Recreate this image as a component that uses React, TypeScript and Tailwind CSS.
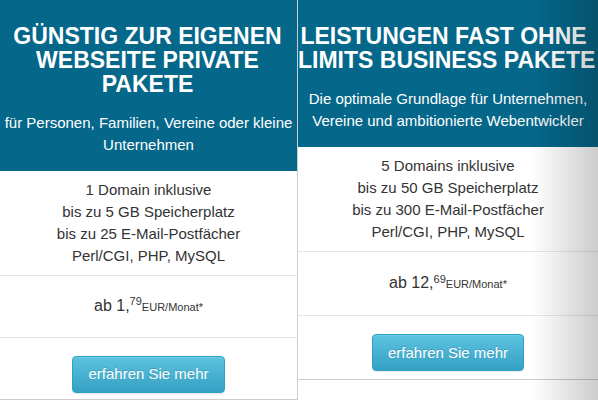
import React from "react";

type Plan = {
  title: React.ReactNode;
  titleClass: string;
  subtitle: React.ReactNode;
  features: string[];
  euro: string;
  cent: string;
};

const plans: Plan[] = [
  {
    title: (
      <>
        GÜNSTIG ZUR EIGENEN
        <br />
        WEBSEITE PRIVATE
        <br />
        PAKETE
      </>
    ),
    titleClass: "pr-[2px]",
    subtitle: (
      <>
        für Personen, Familien, Vereine oder kleine
        <br />
        Unternehmen
      </>
    ),
    features: [
      "1 Domain inklusive",
      "bis zu 5 GB Speicherplatz",
      "bis zu 25 E-Mail-Postfächer",
      "Perl/CGI, PHP, MySQL",
    ],
    euro: "1",
    cent: "79",
  },
  {
    title: (
      <>
        LEISTUNGEN FAST OHNE
        <br />
        LIMITS BUSINESS PAKETE
      </>
    ),
    titleClass: "pr-[9px]",
    subtitle: (
      <>
        Die optimale Grundlage für Unternehmen,
        <br />
        Vereine und ambitionierte Webentwickler
      </>
    ),
    features: [
      "5 Domains inklusive",
      "bis zu 50 GB Speicherplatz",
      "bis zu 300 E-Mail-Postfächer",
      "Perl/CGI, PHP, MySQL",
    ],
    euro: "12",
    cent: "69",
  },
];

function Card({ plan, className }: { plan: Plan; className: string }) {
  return (
    <div className={`flex shrink-0 flex-col ${className}`}>
      <div className="bg-[#05678a] pb-[15px] pt-6 text-center text-white">
        <h2 className={`whitespace-nowrap text-[23px] font-bold leading-6 ${plan.titleClass}`}>{plan.title}</h2>
        <p className="mt-4 whitespace-nowrap text-[15px] leading-[22px]">{plan.subtitle}</p>
      </div>
      <div className="border-b border-[#e6e6e6] py-2 text-center text-[15px] leading-[22px] text-[#333333]">
        {plan.features.map((f) => (
          <div key={f}>{f}</div>
        ))}
      </div>
      <div className="flex h-[64px] items-center justify-center border-b border-[#e6e6e6] text-[16px] text-[#333333]">
        <span className="leading-5">
          ab {plan.euro},<sup className="text-[11px]">{plan.cent}</sup>
          <span className="text-[11px]">EUR/Monat*</span>
        </span>
      </div>
      <div className="flex h-[64px] items-start justify-center border-b border-[#cccccc] pt-[18px]">
        <button className="h-[37px] rounded-[4px] border border-[#2aa3c6] bg-linear-to-b from-[#5cc2e0] to-[#34a1c3] px-[15px] text-[15px] leading-5 text-white shadow-[inset_0_1px_0_rgba(255,255,255,0.15),0_1px_1px_rgba(0,0,0,0.1)] [text-shadow:0_-1px_0_rgba(0,0,0,0.15)]">
          erfahren Sie mehr
        </button>
      </div>
    </div>
  );
}

export default function App() {
  return (
    <div className="relative flex h-[400px] w-[598px] overflow-hidden bg-white [font-family:Liberation_Sans,Arial,sans-serif]">
      <Card plan={plans[0]} className="w-[297px]" />
      <div className="w-px shrink-0 bg-[#cccccc]" />
      <Card plan={plans[1]} className="w-[300px]" />
      <div className="pointer-events-none absolute right-0 top-0 h-full w-[66px] bg-linear-to-r from-transparent to-black/20" />
    </div>
  );
}
